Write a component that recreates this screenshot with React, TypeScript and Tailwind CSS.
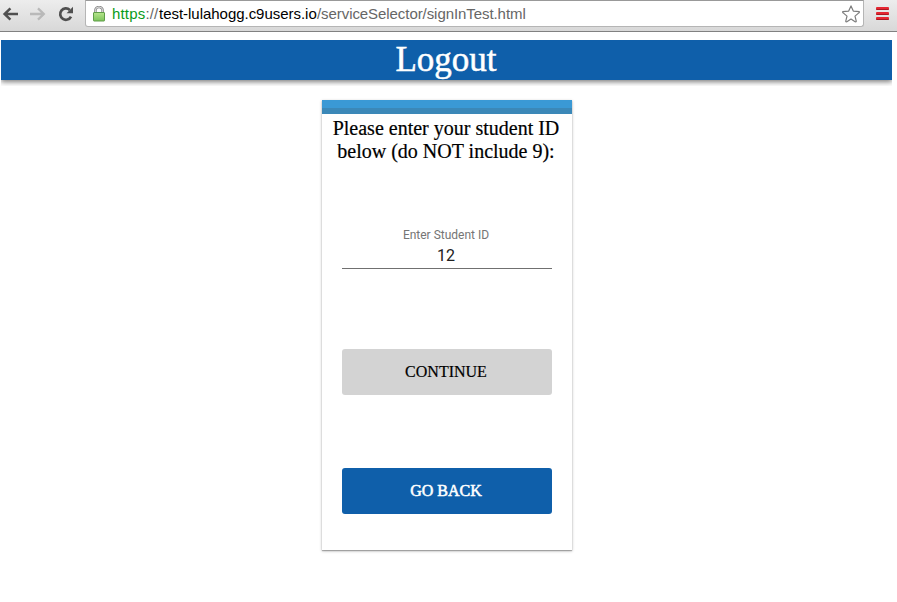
function BackIcon() {
  return (
    <svg className="h-4 w-4" viewBox="0 0 16 16" fill="none" stroke="#505050" strokeWidth="2.5">
      <path d="M2 8H16M8.4 2.4L2.6 8L8.4 13.6" />
    </svg>
  );
}

function ForwardIcon() {
  return (
    <svg className="h-4 w-4" viewBox="0 0 16 16" fill="none" stroke="#b9b9b9" strokeWidth="2.3">
      <path d="M0 8H14M8 2.4L13.8 8L8 13.6" />
    </svg>
  );
}

function ReloadIcon() {
  return (
    <svg className="h-4 w-4" viewBox="0 0 16 16">
      <path d="M13 10.6A5.7 5.7 0 1 1 11.8 3.9" fill="none" stroke="#505050" strokeWidth="2.7" />
      <path d="M15 .8V7.2H8.6Z" fill="#505050" />
    </svg>
  );
}

function LockIcon() {
  return (
    <svg className="h-4 w-3" viewBox="0 0 12 16">
      <defs>
        <linearGradient id="lock" x1="0" y1="0" x2="0" y2="1">
          <stop offset="0" stopColor="#b6e58c" />
          <stop offset="1" stopColor="#7cc45b" />
        </linearGradient>
      </defs>
      <path d="M2.4 8V4.2A3.6 3.2 0 0 1 9.6 4.2V8" fill="none" stroke="#8c8c8c" strokeWidth="2.6" />
      <path d="M2.4 8V4.2A3.6 3.2 0 0 1 9.6 4.2V8" fill="none" stroke="#dedede" strokeWidth="1" />
      <rect x=".5" y="6.5" width="11" height="8.5" rx=".5" fill="url(#lock)" stroke="#5f9d48" />
    </svg>
  );
}

function StarIcon() {
  return (
    <svg className="h-[18px] w-[18px]" viewBox="0 0 18 18" fill="#fff" stroke="#7c7c7c" strokeWidth="1.2" strokeLinejoin="round">
      <path d="M9 .9L11.3 6.1L17.3 6.6Q17.6 7.4 16.8 7.9L13 11.1L14.3 16.3Q14 17.1 13.1 16.8L9 14.1L4.9 16.8Q4 17.1 3.7 16.3L5 11.1L1.2 7.9Q.4 7.4 .7 6.6L6.7 6.1Z" />
    </svg>
  );
}

function Toolbar() {
  return (
    <div className="flex h-8 items-start border-b border-[#818181] bg-gradient-to-b from-[#ededed] to-[#d8d8d8]">
      <div className="flex h-[27px] w-[85px] shrink-0 items-center gap-3 pl-[2px]">
        <BackIcon />
        <ForwardIcon />
        <ReloadIcon />
      </div>
      <div className="flex h-[27px] w-[779px] items-center rounded-b-[3px] border border-[#b5b5b5] border-t-[#999] bg-white pr-[3px] pl-[7px] font-['Liberation_Sans',sans-serif] text-[15px] whitespace-nowrap">
        <LockIcon />
        <div className="ml-[7px] flex flex-1 leading-[17px]">
          <span className="w-[47px] tracking-[0.18px] text-[#666]">
            <span className="text-[#0a9b19]">https</span>://
          </span>
          <span className="w-[158px] tracking-[-0.03px] text-black">test-lulahogg.c9users.io</span>
          <span className="tracking-[-0.07px] text-[#666]">/serviceSelector/signInTest.html</span>
        </div>
        <StarIcon />
      </div>
      <div className="mt-[7px] ml-3 flex w-[13px] flex-col gap-[2px]">
        <div className="h-[3px] rounded-[1px] border-b border-[#a91820] bg-[#e52631]" />
        <div className="h-[3px] rounded-[1px] border-b border-[#a91820] bg-[#e52631]" />
        <div className="h-[3px] rounded-[1px] border-b border-[#a91820] bg-[#e52631]" />
      </div>
    </div>
  );
}

export default function App() {
  return (
    <div className="h-[602px] w-[897px] overflow-hidden bg-white font-['Liberation_Serif',serif] text-black">
      <Toolbar />
      <header className="mt-2 ml-px flex h-10 w-[891px] items-center justify-center bg-[#0f5faa] pr-px text-[35px] leading-10 text-white [-webkit-text-stroke:0.5px_white] [clip-path:inset(0_0_-6px_0)] shadow-[0_2px_5px_rgba(0,0,0,0.5)]">
        Logout
      </header>
      <main className="mt-5 ml-[322px] flex h-[450px] w-[250px] flex-col bg-white text-center shadow-[0_1px_3px_rgba(0,0,0,0.25),0_1px_1px_rgba(0,0,0,0.25)]">
        <div className="h-[14px] shrink-0 border-b-[6px] border-[#3b88b8] bg-[#3a99d5]" />
        <p className="mt-[3px] h-[46px] pr-[2px] text-[20px] leading-[23px] [-webkit-text-stroke:0.2px_black]">
          Please enter your student ID
          <br />
          below (do NOT include 9):
        </p>
        <div className="mx-5 mt-[64px] h-[42px] border-b border-[#707070] pr-[2px] font-['Roboto',sans-serif]">
          <div className="h-[17px] text-[12px] leading-4 text-[#757575]">Enter Student ID</div>
          <div className="h-6 text-[16px] leading-6 text-[#212121]">12</div>
        </div>
        <button className="mx-5 mt-20 h-[46px] rounded-[3px] bg-[#d3d3d3] pr-[2px] text-[16px] leading-[46px] [-webkit-text-stroke:0.2px_black]">CONTINUE</button>
        <button className="mx-5 mt-[73px] h-[46px] rounded-[3px] bg-[#0f5faa] pr-[2px] text-[16px] leading-[46px] text-white [-webkit-text-stroke:0.55px_white]">
          GO BACK
        </button>
      </main>
    </div>
  );
}
